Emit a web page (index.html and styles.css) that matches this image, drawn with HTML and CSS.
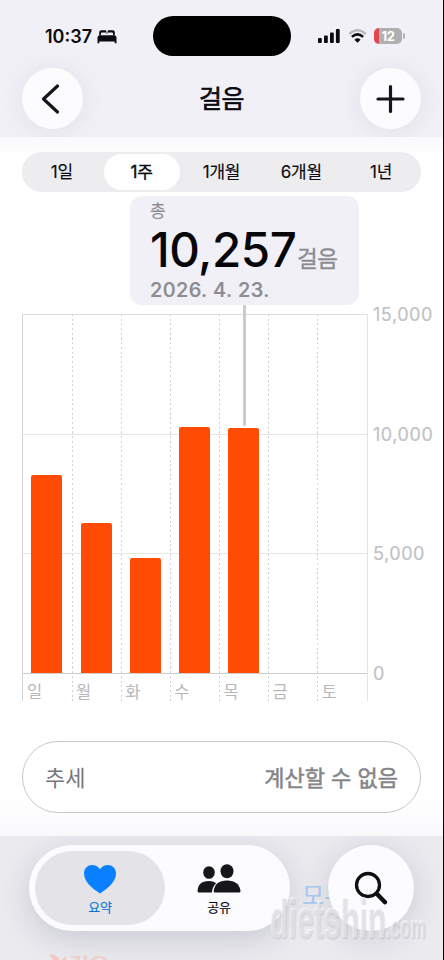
FILE: index.html
```html
<!DOCTYPE html>
<html lang="ko">
<head>
<meta charset="utf-8">
<title>걸음</title>
<link rel="stylesheet" href="styles.css">
</head>
<body>
<div class="phone">
  <header class="top">
    <div class="status">
      <div class="clock"><span>10:37</span>
        <svg width="20" height="14" viewBox="0 0 20 14"><path d="M2.200 5.600V2.300Q2.200.3 4.200.3H8.300Q9.400.3 9.400 1.400V4H3.900V5.600ZM17.800 5.600V2.300Q17.800.3 15.800.3H11.700Q10.600.3 10.600 1.400V4H16.100V5.600Z" fill="#0b0b14"/><path d="M4 4.200V3.200Q4 2.400 5 2.400H8Q9.200 2.400 9.200 3.400V4.200ZM10.800 4.200V3.400Q10.800 2.400 12 2.400H15Q16 2.400 16 3.200V4.200Z" fill="#f0f0f6"/><path d="M2.500 5.300H17.500Q19.500 5.600 19.500 7.600V13.300H17.700V11.400H2.300V13.300H.5V7.600Q.5 5.600 2.500 5.300Z" fill="#0b0b14"/></svg>
      </div>
      <div class="island"></div>
      <div class="signals">
        <svg class="cell" width="22" height="14" viewBox="0 0 22 14"><rect x="0" y="9" width="3.800" height="5" rx="1"/><rect x="6" y="6.500" width="3.800" height="7.500" rx="1"/><rect x="12" y="3.500" width="3.800" height="10.500" rx="1"/><rect x="17.900" y="0" width="3.800" height="14" rx="1"/></svg>
        <svg class="wifi" width="19" height="14" viewBox="0 0 19 14" fill="none"><path d="M1.200 5Q9.500-2.500 17.800 5" stroke="#b9b9be" stroke-width="2.500"/><path d="M3.900 7.900Q9.500 2.900 15.100 7.900" stroke="#0b0b14" stroke-width="2.600"/><path d="M6.400 10.700Q9.500 8 12.600 10.700L9.500 13.800Z" fill="#0b0b14"/></svg>
        <div class="battery"><span>12</span></div>
      </div>
    </div>
    <div class="nav">
      <button class="round"><svg width="61" height="61" viewBox="0 0 61 61"><path d="M35.500 18 21.500 31 35.500 44" /></svg></button>
      <h1>걸음</h1>
      <button class="round"><svg width="61" height="61" viewBox="0 0 61 61"><path d="M30.500 18.500V43.500M18 31H43"/></svg></button>
    </div>
  </header>

  <main>
    <div class="segments"><span>1일</span><span class="on">1주</span><span>1개월</span><span>6개월</span><span>1년</span></div>
    <section class="chart">
      <div class="plot">
        <div class="grid"><i></i><i></i><i></i></div>
        <div class="day"><div class="area"><b class="sun"></b></div><span>일</span></div>
        <div class="day"><div class="area"><b class="mon"></b></div><span>월</span></div>
        <div class="day"><div class="area"><b class="tue"></b></div><span>화</span></div>
        <div class="day"><div class="area"><b class="wed"></b></div><span>수</span></div>
        <div class="day"><div class="area"><b class="thu"></b></div><span>목</span></div>
        <div class="day"><div class="area"></div><span>금</span></div>
        <div class="day"><div class="area"></div><span>토</span></div>
        <div class="rule"></div>
        <div class="callout">
          <div class="kind">총</div>
          <div class="total"><strong>10,257</strong><em>걸음</em></div>
          <div class="date">2026. 4. 23.</div>
        </div>
      </div>
      <div class="axis"><span>15,000</span><span>10,000</span><span>5,000</span><span>0</span></div>
    </section>
    <div class="trend"><span>추세</span><strong>계산할 수 없음</strong></div>
  </main>

  <footer>
    <div class="ghost-link">모두</div>
    <div class="ghost-title"><svg width="18" height="14" viewBox="0 0 18 14"><path d="M1 0Q8 0 12 6L14 14H8Q6 6 1 0M14 6Q15 3 18 3V14H15Z"/></svg>걸음</div>
    <nav class="tabs">
      <a class="tab active"><svg width="34" height="32" viewBox="0 0 34 32"><path d="M17 30.500C11 26.500 1 19.500 1 10.500C1 1.500 12-1 17 6.200C22-1 33 1.500 33 10.500C33 19.500 23 26.500 17 30.500Z"/></svg><span>요약</span></a>
      <a class="tab"><svg width="44" height="32" viewBox="0 0 44 32"><ellipse cx="12" cy="9.500" rx="5.800" ry="6.300"/><path d="M.5 29Q.5 18 12 18Q16.500 18 19.300 20.200Q15.300 23.500 14.900 29.500H2Q.5 29.500.5 28Z"/><ellipse cx="30" cy="8.300" rx="6.500" ry="7"/><path d="M16.700 28Q18 17.500 30 17.500Q42 17.500 43.500 28Q43.500 29.500 42 29.500H18Q16.700 29.500 16.700 28Z"/></svg><span>공유</span></a>
    </nav>
    <button class="search"><svg width="86" height="86" viewBox="0 0 86 86"><circle cx="40" cy="40" r="11.500"/><path d="M49.500 49.500 57 57.200"/></svg></button>
    <div class="watermark"><span class="name">dietshin</span><span class="tld">.com</span></div>
  </footer>
</div>
</body>
</html>
```

FILE: styles.css
```css
* { box-sizing: border-box; }
body { margin: 0; font-family: Inter, "Noto Sans CJK KR", sans-serif; color: #0b0b10; background: #fff; }
button { border: 0; padding: 0; }
svg { display: block; }
.phone { width: 444px; height: 960px; overflow: hidden; display: flex; flex-direction: column; background: #fff; border-right: 1px solid #050508; }

.top { height: 137px; flex: none; background: #f0f0f6; }
.status { height: 68px; display: grid; grid-template-columns: 153px 138px 1fr; padding-top: 16px; }
.island { height: 40px; border-radius: 20px; background: #000; }
.clock { display: flex; align-items: center; height: 40px; padding-left: 45px; font-size: 18px; font-weight: 600; letter-spacing: 0; }
.clock span { width: 52px; }
.clock svg { margin-top: 1px; }
.signals { display: flex; align-items: center; height: 40px; padding-left: 27px; }
.cell { fill: #0b0b14; }
.wifi { margin-left: 8px; }
.battery { position: relative; width: 28px; height: 16px; margin-left: 7px; border-radius: 5px; background: linear-gradient(90deg, #e2474d 5px, #b0b0b4 5px); color: #fff; font-size: 13px; line-height: 16px; font-weight: 700; text-align: center; letter-spacing: -.3px; }
.battery::after { content: ""; position: absolute; left: 29px; top: 5px; width: 2px; height: 6px; border-radius: 0 2px 2px 0; background: #b0b0b4; }
.nav { display: flex; justify-content: space-between; align-items: center; padding: 0 22px; height: 61px; }
.round { width: 61px; height: 61px; border-radius: 50%; background: #fcfcff; box-shadow: 0 2px 26px rgba(40,40,70,.08); }
.round svg { fill: none; stroke: #15151a; stroke-width: 3.2; stroke-linecap: round; stroke-linejoin: round; }
h1 { margin: 0; font-size: 25px; line-height: 62px; font-weight: 400; letter-spacing: -.5px; -webkit-text-stroke: .6px; }

main { height: 699px; flex: none; padding: 15px 22px 0; background: linear-gradient(#f9f9fc, #fff 20px, #fff 660px, #f9f9fc); }
.segments { width: 399px; height: 40px; display: grid; grid-template-columns: repeat(5, 1fr); padding: 2px 0; border-radius: 20px; background: #ededf0; }
.segments span { margin: 0 2px; height: 36px; line-height: 37px; text-align: center; font-size: 17px; font-weight: 400; letter-spacing: -.2px; -webkit-text-stroke: .15px; }
.segments .on { border-radius: 18px; background: #fff; -webkit-text-stroke: .4px; }

.chart { display: flex; margin-top: 122px; }
.plot { position: relative; width: 346px; height: 387px; flex: none; display: grid; grid-template-columns: repeat(7, 1fr); border-left: 1px solid #d4d4d7; border-right: 1px solid #e3e3e5; }
.grid { position: absolute; inset: 0 0 27px 0; display: flex; flex-direction: column; border-top: 1px solid #dededf; border-bottom: 1px solid #cfcfd2; }
.grid i { flex: 1; border-bottom: 1px solid #e6e6e8; }
.grid i:last-child { border: 0; }
.day { position: relative; margin-left: -.6px; background: repeating-linear-gradient(#d2d2d5 0 2px, transparent 2px 4.700px) 0 0 / 1px 100% no-repeat; }
.grid + .day { background: none; }
.area { height: 359px; display: flex; align-items: flex-end; padding-left: 9px; }
.area b { width: 31px; background: #ff4b03; border-radius: 2px 2px 0 0; }
.sun { height: 198px; } .mon { height: 150px; } .tue { height: 115px; } .wed { height: 246px; } .thu { height: 245px; }
.day span { display: block; padding-left: 4.500px; margin-top: 8px; color: #b8b8bb; font-size: 16.500px; line-height: 23px; }
.rule { position: absolute; left: 220px; top: -10px; width: 3px; height: 122px; border-radius: 2px; background: #cbcbce; }
.callout { position: absolute; left: 107px; top: -118px; width: 229px; height: 109px; border-radius: 12px; background: #f0f0f6; padding: 5px 0 0 20px; color: #8b8b90; }
.kind { height: 19px; line-height: 20px; font-size: 17px; -webkit-text-stroke: .1px; }
.total { height: 60px; display: flex; align-items: baseline; line-height: 60px; white-space: nowrap; }
.total strong { width: 147px; color: #07070b; font-size: 47.500px; font-weight: 500; letter-spacing: -.5px; }
.total em { font-style: normal; font-size: 22.500px; font-weight: 400; letter-spacing: -.5px; -webkit-text-stroke: .3px; }
.date { height: 20px; line-height: 21px; font-size: 20px; font-weight: 500; letter-spacing: .4px; -webkit-text-stroke: .2px; }
.axis { height: 379px; margin: -9px 0 17px 5px; display: flex; flex-direction: column; justify-content: space-between; color: #c2c2c5; font-size: 18px; line-height: 20px; letter-spacing: .55px; -webkit-text-stroke: .2px; }

.trend { width: 399px; height: 72px; margin-top: 40px; display: flex; align-items: center; justify-content: space-between; padding: 0 22px 3px; border: 1px solid #c8c8cb; border-radius: 36px; background: #fff; color: #77777b; font-size: 22px; }
.trend strong { font-weight: 400; color: #858589; -webkit-text-stroke: .5px; }

footer { position: relative; height: 124px; flex: none; display: flex; padding: 9px 29px 0; justify-content: space-between; background: #eaeaef; overflow: hidden; }
.tabs { width: 261px; height: 86px; padding: 6px; display: flex; border-radius: 43px; background: #fcfcff; box-shadow: 0 8px 30px rgba(40,40,60,.16); position: relative; }
.tab { width: 130px; height: 74px; flex: none; display: flex; flex-direction: column; align-items: center; border-radius: 37px; padding-top: 12px; }
.tab + .tab { margin-left: -11px; }
.tab svg { fill: #15151a; }
.tab span { font-size: 13px; line-height: 18px; margin-top: 3px; font-weight: 400; letter-spacing: -.3px; -webkit-text-stroke: .1px; }
.active { background: #e3e3e8; color: #0876d8; }
.active svg { fill: #0a7fff; }
.search { position: relative; width: 86px; height: 86px; border-radius: 50%; background: #fcfcff; box-shadow: 0 6px 30px rgba(40,40,60,.16); }
.search svg { fill: none; stroke: #101014; stroke-width: 3.300; stroke-linecap: round; }
.search path { stroke-width: 4.500; }
.ghost-link { position: absolute; left: 302px; top: 44px; color: #a8cdf2; font-size: 24px; line-height: 32px; font-weight: 400; }
.ghost-title { position: absolute; left: 48px; top: 118px; display: flex; gap: 3px; color: #f3d3cb; font-size: 22px; line-height: 24px; font-weight: 600; }
.ghost-title svg { fill: #f7c9bc; }
.watermark { position: absolute; left: 270px; top: 61px; height: 44px; display: flex; align-items: baseline; font-family: "Liberation Sans", sans-serif; font-weight: 700; line-height: 44px; color: rgba(232,232,236,.55); text-shadow: 1px 1px 1px rgba(100,100,110,.2), -1px -1px 1px rgba(255,255,255,.6); white-space: nowrap; transform: scaleX(.55); transform-origin: 0 50%; }
.name { font-size: 55px; }
.tld { font-size: 31px; }
```
